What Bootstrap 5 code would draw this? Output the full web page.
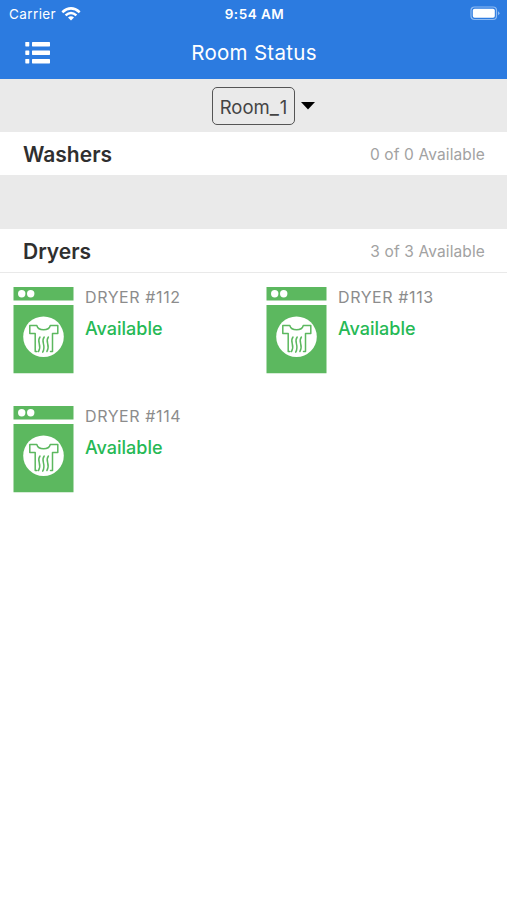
<!DOCTYPE html>
<html lang="en">
<head>
<meta charset="utf-8">
<meta name="viewport" content="width=device-width, initial-scale=1">
<title>Room Status</title>
<link href="https://cdn.jsdelivr.net/npm/bootstrap@5.3.0/dist/css/bootstrap.min.css" rel="stylesheet">
<style>
body { font-family: Inter, "Liberation Sans", sans-serif; color: #2f2f2f; overflow: hidden; }
svg { display: block; flex: none; }
.app-head { background: #2c7be0; height: 79px; }
.status-bar { height: 27px; font-size: 13.5px; line-height: 27px; padding: 1px 7px 0 9px; }
.status-bar .carrier { letter-spacing: .4px; }
.status-bar .wifi { margin: 0 0 2px 5px; }
.status-bar .battery { margin-bottom: 2px; }
.status-bar .clock { font-weight: 600; font-size: 13.5px; letter-spacing: .5px; padding-left: 0; }
.title-bar { height: 52px; padding: 0 24px; }
.app-title { font-size: 20.5px; line-height: 52px; height: 52px; letter-spacing: .3px; padding-left: 1px; }
.room-picker { background: #eaeaea; height: 53px; padding-left: 22px; }
.room-name { border: 1.5px solid #555; border-radius: 5px; width: 83px; height: 38px; font-size: 18.5px; line-height: 38px; color: #444; }
.room-name .sep { font-size: 20px; line-height: 1; letter-spacing: 1px; }
.section-head { height: 43px; padding: 1px 22px 0 23px; }
.section-head h2 { font-size: 21px; font-weight: 600; line-height: 43px; }
.section-head span { font-size: 15.5px; color: #a2a2a2; line-height: 43px; letter-spacing: .12px; }
.gap-band { background: #eaeaea; height: 54px; }
.line-below { border-bottom: 1px solid #e9e9e9; height: 44px; }
.machines { margin-right: 1px; }
.machine { height: 118.5px; padding: 14px 0 0 13px; }
.machine-text { padding-left: 11px; }
.machine-id { font-size: 16px; line-height: 20px; color: #8c8c8c; letter-spacing: .6px; }
.machine-state { font-size: 18px; line-height: 24px; color: #26b955; margin-top: 10px; font-weight: 500; }
</style>
<script src="https://cdn.jsdelivr.net/npm/bootstrap@5.3.0/dist/js/bootstrap.bundle.min.js"></script>
</head>
<body class="bg-white">
<svg width="0" height="0" class="position-absolute">
  <symbol id="dryer" viewBox="0 0 61 87">
    <path fill="#5cb85f" d="M.5 0h60v13.500H.5zM.5 18h60v68.300H.5z"/>
    <circle cx="8.700" cy="6.700" r="3.700" fill="#fff"/><circle cx="17.700" cy="6.700" r="3.700" fill="#fff"/>
    <circle cx="30.500" cy="49.700" r="20.300" fill="#fff"/>
    <g fill="none" stroke="#5cb85f" stroke-width="1.500" stroke-linejoin="round" stroke-linecap="round">
      <path d="M24 64.500h-1.800V46.500H16.800V38.500h7c1.500 5.700 12 5.700 13.500 0h7.500v8H39.500V64.500h-2"/>
      <path d="M27 50c-4 5 2.500 8-1.500 14.500M31.200 50c-4 5 2.500 8-1.500 15.200M35.400 50c-4 5 2.500 8-1.500 14.500"/>
    </g>
  </symbol>
</svg>

<header class="app-head text-white">
  <div class="status-bar row g-0">
    <div class="col d-flex align-items-center">
      <span class="carrier">Carrier</span>
      <svg class="wifi" width="20" height="14" viewBox="0 0 20 14" fill="none" stroke="#fff" stroke-width="2.500">
        <path d="M1.300 5.200Q10-2.500 18.700 5.200M4.600 8.400Q10 3.500 15.400 8.400"/>
        <path d="M7 10.500Q10 8.100 13 10.500L10 13.500Z" fill="#fff" stroke="none"/>
      </svg>
    </div>
    <div class="col-auto clock">9:54 AM</div>
    <div class="col d-flex align-items-center justify-content-end">
      <svg class="battery" width="30" height="15" viewBox="0 0 30 15">
        <rect x="1" y="1" width="25.500" height="12.500" rx="3.500" fill="none" stroke="#8fbbf2" stroke-width="1.200"/>
        <rect x="2.800" y="2.800" width="22" height="9" rx="1.800" fill="#fff"/>
        <path d="M28 5.300q3 2 0 4z" fill="#8fbbf2"/>
      </svg>
    </div>
  </div>
  <div class="title-bar row g-0 align-items-center">
    <div class="col">
      <svg width="27" height="22" viewBox="0 0 27 22" fill="#fff">
        <rect x="1.300" y="0" width="4" height="4.400" rx=".6"/><rect x="8" y="0" width="18" height="4.400" rx=".6"/>
        <rect x="1.300" y="8.500" width="4" height="4.400" rx=".6"/><rect x="8" y="8.500" width="18" height="4.400" rx=".6"/>
        <rect x="1.300" y="17" width="4" height="4.400" rx=".6"/><rect x="8" y="17" width="18" height="4.400" rx=".6"/>
      </svg>
    </div>
    <h1 class="col-auto app-title fw-normal m-0">Room Status</h1>
    <div class="col"></div>
  </div>
</header>

<main>
  <div class="room-picker d-flex justify-content-center align-items-center">
    <div class="room-name text-center text-nowrap">Room<span class="sep">_</span>1</div>
    <svg class="ms-1" width="18" height="8" viewBox="0 0 18 8"><path d="M2 0h14L9 7.500z" fill="#000"/></svg>
  </div>
  <section>
    <div class="section-head d-flex justify-content-between align-items-center">
      <h2 class="m-0">Washers</h2><span>0 of 0 Available</span>
    </div>
    <div class="gap-band"></div>
  </section>
  <section>
    <div class="section-head line-below d-flex justify-content-between align-items-center">
      <h2 class="m-0">Dryers</h2><span>3 of 3 Available</span>
    </div>
    <div class="machines row row-cols-2 g-0">
      <div class="col machine d-flex">
        <svg width="61" height="87"><use href="#dryer"/></svg>
        <div class="machine-text"><div class="machine-id">DRYER #112</div><div class="machine-state">Available</div></div>
      </div>
      <div class="col machine d-flex">
        <svg width="61" height="87"><use href="#dryer"/></svg>
        <div class="machine-text"><div class="machine-id">DRYER #113</div><div class="machine-state">Available</div></div>
      </div>
      <div class="col machine d-flex">
        <svg width="61" height="87"><use href="#dryer"/></svg>
        <div class="machine-text"><div class="machine-id">DRYER #114</div><div class="machine-state">Available</div></div>
      </div>
    </div>
  </section>
</main>
</body>
</html>
